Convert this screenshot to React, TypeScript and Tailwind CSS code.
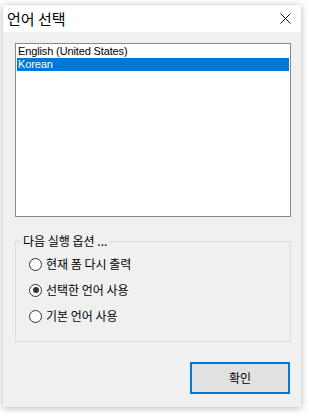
import React from "react";

const kr = { fontFamily: '"Noto Sans CJK KR", "Noto Sans", sans-serif' };
const en = { fontFamily: '"Liberation Sans", "Noto Sans CJK KR", sans-serif' };

function Radio({ checked, label }: { checked?: boolean; label: string }) {
  return (
    <div className="flex h-[26px] items-center">
      <span className="flex h-[13px] w-[13px] items-center justify-center rounded-full border border-[#333333] bg-white">
        {checked && <span className="h-[6px] w-[6px] rounded-full bg-[#333333]" />}
      </span>
      <span className="ml-[4px] text-[12px] leading-none text-black" style={kr}>
        {label}
      </span>
    </div>
  );
}

export default function App() {
  return (
    <div className="h-[416px] w-[309px] bg-white pl-[3px] pt-[5px]">
      <div className="flex h-[402px] w-[298px] flex-col bg-[#f0f0f0] shadow-[0_1px_7px_rgba(0,0,0,0.3)]">
        <div className="flex h-[27px] items-center justify-between bg-white pl-[4px] pr-[10px]">
          <span className="text-[15px] leading-none text-black" style={kr}>
            언어 선택
          </span>
          <svg width="11" height="11" viewBox="0 0 11 11">
            <path d="M0.5 0.5 L10.5 10.5 M10.5 0.5 L0.5 10.5" stroke="#111" strokeWidth="1" />
          </svg>
        </div>
        <div className="flex flex-1 flex-col pl-[12px] pr-[10px] pt-[11px]">
          <div className="h-[174px] w-[276px] border border-[#828790] bg-white p-[1px]" style={en}>
            <div className="flex h-[13px] items-center pl-[1px] text-[11px] leading-[13px] tracking-[-0.13px] text-black">
              English (United States)
            </div>
            <div className="flex h-[13px] items-center bg-[#0078d7] pl-[1px] text-[11px] leading-[13px] tracking-[-0.13px] text-white">
              Korean
            </div>
          </div>
          <div className="relative mt-[24px] h-[101px] w-[276px] border border-[#dcdcdc] pl-[13px] pt-[9px]">
            <span
              className="absolute left-[5px] top-[-8px] bg-[#f0f0f0] px-[2px] text-[12px] leading-[14px] text-black"
              style={kr}
            >
              다음 실행 옵션 ...
            </span>
            <Radio label="현재 폼 다시 출력" />
            <Radio checked label="선택한 언어 사용" />
            <Radio label="기본 언어 사용" />
          </div>
          <div className="mt-[20px] flex justify-end pr-[1px]">
            <button
              className="flex h-[32px] w-[100px] items-center justify-center border-2 border-[#0078d7] bg-[#e1e1e1] text-[12px] text-black"
              style={kr}
            >
              확인
            </button>
          </div>
        </div>
      </div>
    </div>
  );
}
